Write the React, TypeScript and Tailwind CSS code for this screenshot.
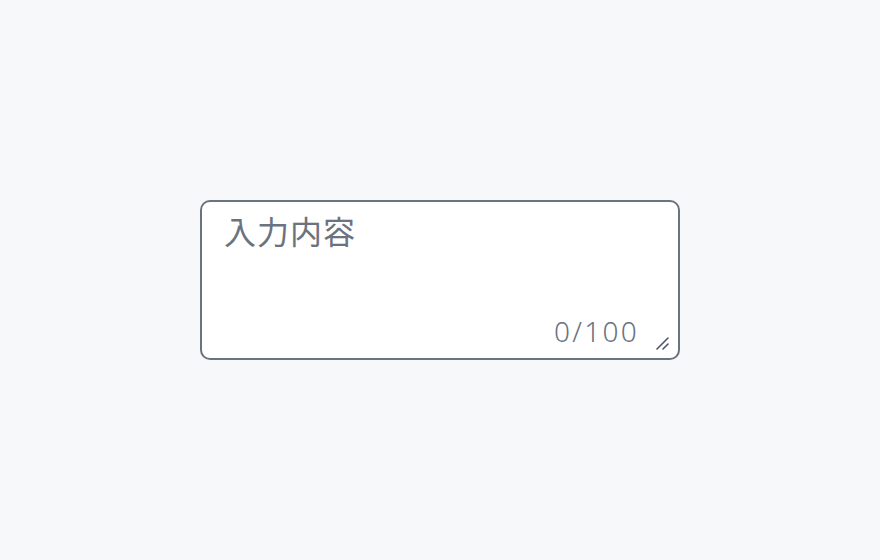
import { useState } from "react";

const MAX = 100;

export default function App() {
  const [value, setValue] = useState("");

  return (
    <div
      className="flex min-h-screen w-full items-center justify-center bg-[#f7f8fa]"
      style={{ fontFamily: '"Noto Sans", "Noto Sans CJK JP", sans-serif' }}
    >
      <div className="relative w-[480px]">
        <textarea
          className="block h-[160px] w-full resize-none rounded-[10px] border-2 border-[#6b7280] bg-white px-[22px] pt-[10px] pb-10 text-[32px] leading-[1.25] tracking-[0.03em] text-gray-700 placeholder:text-[#6b7280] outline-none"
          placeholder="入力内容"
          maxLength={MAX}
          value={value}
          onChange={(e) => setValue(e.target.value)}
        />
        <span className="pointer-events-none absolute right-[41px] bottom-[15px] text-[28px] leading-none font-light tracking-[0.08em] text-[#6b7280]">
          {value.length}/{MAX}
        </span>
        {/* resize grip */}
        <svg
          className="pointer-events-none absolute right-[10px] bottom-[10px]"
          width="14"
          height="14"
          viewBox="0 0 14 14"
          fill="none"
          stroke="#4b5563"
          strokeWidth="1.6"
          strokeLinecap="round"
        >
          <path d="M1 13 L12 2" />
          <path d="M7 13 L12 8" />
        </svg>
      </div>
    </div>
  );
}
